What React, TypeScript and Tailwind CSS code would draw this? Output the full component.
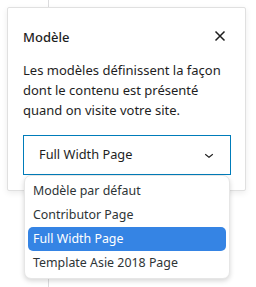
import React from "react";

export default function App() {
  const items = ["Modèle par défaut", "Contributor Page", "Full Width Page", "Template Asie 2018 Page"];
  return (
    <div
      className="relative w-[256px] h-[287px] overflow-hidden bg-white text-[#1e1e1e]"
      style={{ fontFamily: '"Noto Sans", "Open Sans", sans-serif' }}
    >
      <div className="absolute left-[48px] top-0 h-full w-px bg-[#dcdcde]" />
      <div className="relative ml-[7px] mt-[7px] w-[239px] h-[184px] rounded-[2px] border border-[#e0e0e0] bg-white shadow-[0_2px_6px_rgba(0,0,0,0.08)] px-[15px] pt-[19px]">
        <div className="flex items-center justify-between h-[20px]">
          <span className="text-[13px] font-medium leading-[20px]">Modèle</span>
          <svg width="12" height="12" viewBox="0 0 12 12" className="mr-[4px] -mt-[3px]">
            <path d="M1.5 1.5 L10.5 10.5 M10.5 1.5 L1.5 10.5" stroke="#1e1e1e" strokeWidth="1.5" fill="none" />
          </svg>
        </div>
        <p className="mt-[13px] text-[13px] leading-[20px]">
          Les modèles définissent la façon dont le contenu est présenté quand on visite votre site.
        </p>
        <div className="mt-[15px] flex h-[40px] w-[208px] items-center justify-between border border-[#007cba] pl-[15px] pr-[12px]">
          <span className="text-[12.8px]">Full Width Page</span>
          <svg width="18" height="18" viewBox="0 0 24 24">
            <path d="M17.5 11.6L12 16l-5.5-4.4.9-1.2L12 14l4.6-3.6 1 1.2z" fill="#1e1e1e" />
          </svg>
        </div>
      </div>
      <div className="absolute left-[24px] top-[175px] w-[206px] rounded-[7px] border border-[#e6e6e6] bg-white p-[3px] shadow-[0_2px_5px_rgba(0,0,0,0.16)]">
        {items.map((it, i) => (
          <div
            key={it}
            className={
              i === 2
                ? "h-[24px] rounded-[5px] bg-[#3584e4] pl-[5px] text-[12.4px] leading-[24px] text-white"
                : "h-[24px] pl-[5px] text-[12.4px] leading-[24px] text-[#2e3436]"
            }
          >
            {it}
          </div>
        ))}
      </div>
    </div>
  );
}
